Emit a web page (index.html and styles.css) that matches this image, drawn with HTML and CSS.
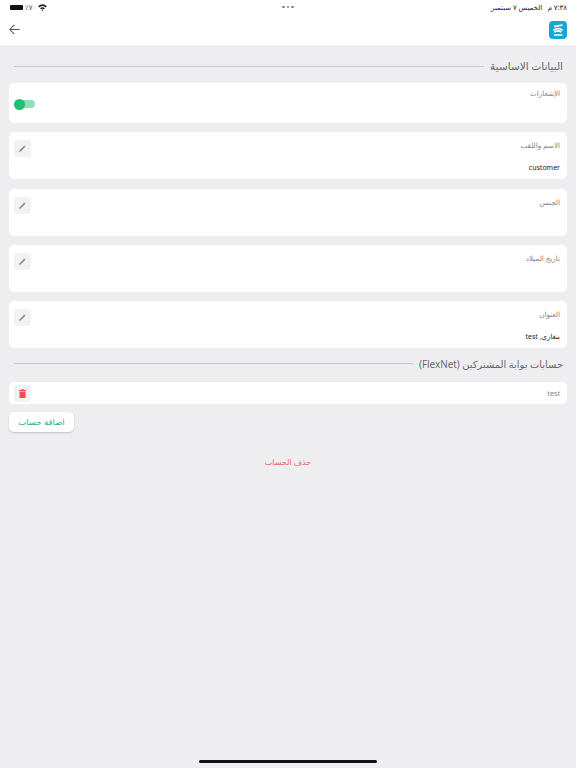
FILE: index.html
```html
<!DOCTYPE html>
<html lang="ar" dir="rtl">

<head>
    <meta charset="UTF-8">
    <meta name="viewport" content="width=device-width, initial-scale=1.0">
    <title>Profile</title>
    <link rel="stylesheet" href="styles.css">
</head>

<body>
    <header class="top">
        <div class="status">
            <div class="status-time">٧:٣٨ م&nbsp;&nbsp; الخميس ٧ سبتمبر</div>
            <div class="status-dots"><i></i><i></i><i></i></div>
            <div class="status-icons">
                <svg class="wifi" viewBox="0 0 10 8" width="9" height="7">
                    <path d="M0 2.6 C3 -.6 7 -.6 10 2.6 L8.7 3.9 C6.4 1.6 3.6 1.6 1.3 3.9 Z M2.2 4.8 C3.9 3.2 6.1 3.2 7.8 4.8 L6.6 6 C5.6 5.2 4.4 5.2 3.4 6 Z M4 6.8 L5 8 L6 6.8 C5.4 6.3 4.6 6.3 4 6.8 Z" fill="#222"/>
                </svg>
                <span class="percent">٧٠٪</span>
                <span class="battery"></span>
            </div>
        </div>
        <div class="nav">
            <svg class="logo" viewBox="0 0 18 18" width="18" height="18">
                <rect width="18" height="18" rx="4" fill="#1ba5d6"/>
                <path d="M5 5.6 L13.6 4 M4.4 9.4 C7.4 7 10.8 7 13.6 9.4 M5.4 11.2 C7.6 9.6 10.2 9.6 12.4 11.2 M5 14 H13.4" stroke="#fff" stroke-width="1.6" fill="none"/>
            </svg>
            <svg class="back" viewBox="0 0 12 12" width="11" height="11">
                <path d="M11.5 6 H1 M5.8 1 L.8 6 L5.8 11" stroke="#555" stroke-width="1.1" fill="none"/>
            </svg>
        </div>
    </header>

    <main class="content">
        <div class="section-head">
            <h2>البيانات الاساسية</h2>
            <span class="rule"></span>
        </div>

        <div class="card card-switch">
            <div class="field-label">الإشعارات</div>
            <div class="switch"><span class="knob"></span></div>
        </div>

        <div class="card card-field">
            <div class="field-text">
                <div class="field-label">الاسم واللقب</div>
                <div class="field-value">customer</div>
            </div>
            <button class="icon-btn"><svg viewBox="0 0 10 10" width="7" height="7"><path d="M0 10 L.6 7.8 L7.6 .8 L9.2 2.4 L2.2 9.4 Z" fill="#88888c"/></svg></button>
        </div>

        <div class="card card-field">
            <div class="field-text">
                <div class="field-label">الجنس</div>
                <div class="field-value"></div>
            </div>
            <button class="icon-btn"><svg viewBox="0 0 10 10" width="7" height="7"><path d="M0 10 L.6 7.8 L7.6 .8 L9.2 2.4 L2.2 9.4 Z" fill="#88888c"/></svg></button>
        </div>

        <div class="card card-field">
            <div class="field-text">
                <div class="field-label">تاريخ الميلاد</div>
                <div class="field-value"></div>
            </div>
            <button class="icon-btn"><svg viewBox="0 0 10 10" width="7" height="7"><path d="M0 10 L.6 7.8 L7.6 .8 L9.2 2.4 L2.2 9.4 Z" fill="#88888c"/></svg></button>
        </div>

        <div class="card card-field">
            <div class="field-text">
                <div class="field-label">العنوان</div>
                <div class="field-value">بنغازي, test</div>
            </div>
            <button class="icon-btn"><svg viewBox="0 0 10 10" width="7" height="7"><path d="M0 10 L.6 7.8 L7.6 .8 L9.2 2.4 L2.2 9.4 Z" fill="#88888c"/></svg></button>
        </div>

        <div class="section-head section-second">
            <h2>حسابات بوابة المشتركين (FlexNet)</h2>
            <span class="rule"></span>
        </div>

        <div class="card card-account">
            <div class="field-label">test</div>
            <button class="icon-btn"><svg viewBox="0 0 8 10" width="7" height="9"><path d="M0 1 H2.4 L2.8 0 H5.2 L5.6 1 H8 V2.2 H0 Z M.6 2.8 H7.4 V10 H.6 Z" fill="#f5484f"/></svg></button>
        </div>

        <div class="actions">
            <button class="add-btn">اضافة حساب</button>
        </div>

        <div class="delete-row">حذف الحساب</div>
    </main>

    <div class="home-bar"></div>
</body>

</html>
```

FILE: styles.css
```css
* {
    margin: 0;
    padding: 0;
    box-sizing: border-box;
}

body {
    height: 768px;
    overflow: hidden;
    position: relative;
    background-color: #eeeef0;
    font-family: "Noto Sans", "DejaVu Sans", sans-serif;
}

.top {
    height: 45px;
    background-color: #fff;
    padding: 0 9px;
}

.status {
    height: 14px;
    display: flex;
    align-items: center;
    justify-content: space-between;
    font-size: 7px;
    color: #222;
}

.status-time {
    width: 120px;
}

.status-dots {
    display: flex;
    gap: 2px;
}

.status-dots i {
    width: 2.5px;
    height: 2.5px;
    border-radius: 50%;
    background-color: #888;
}

.status-icons {
    width: 120px;
    display: flex;
    align-items: center;
    justify-content: flex-end;
    gap: 2px;
}

.percent {
    font-size: 7px;
    color: #444;
}

.battery {
    width: 13px;
    height: 5px;
    margin-left: 1px;
    border-radius: 1px;
    background-color: #111;
}

.nav {
    height: 31px;
    display: flex;
    align-items: center;
    justify-content: space-between;
}

.section-head {
    height: 38px;
    display: flex;
    align-items: center;
    padding: 4px 4px 0 5px;
    gap: 6px;
}

.section-head h2 {
    font-size: 10.5px;
    font-weight: 400;
    color: #66666b;
    white-space: nowrap;
}

.rule {
    flex: 1;
    height: 1px;
    background-color: #c9c9cc;
}

.content {
    padding: 0 9px;
}

.card {
    background-color: #fff;
    border-radius: 5px;
    margin-bottom: 9.33px;
}

.card-switch {
    height: 40px;
    padding: 5px 7px 0 7px;
}

.field-label {
    font-size: 7.2px;
    line-height: 10px;
    color: #85858a;
}

.switch {
    width: 19px;
    height: 8px;
    margin-top: 2px;
    margin-right: auto;
    background-color: #8fdfb8;
    border-radius: 4px;
    display: flex;
    align-items: center;
}

.knob {
    width: 11px;
    height: 11px;
    margin-right: auto;
    margin-left: -2px;
    border-radius: 50%;
    background-color: #1dbf73;
}

.card-field {
    height: 47px;
    display: flex;
    justify-content: space-between;
    padding: 8px 7px 0 5px;
}

.field-value {
    margin-top: 13px;
    height: 10px;
    font-size: 7px;
    line-height: 10px;
    color: #222;
}

.icon-btn {
    width: 17px;
    height: 17px;
    border: none;
    border-radius: 3px;
    background-color: #f2f2f4;
    display: flex;
    align-items: center;
    justify-content: center;
}

.section-second {
    height: 24.5px;
    padding: 0 4px 12px 5px;
}

.section-second h2 {
    font-size: 9.9px;
}

.card-account {
    height: 22px;
    display: flex;
    align-items: center;
    justify-content: space-between;
    padding: 0 7px 0 5px;
    margin-bottom: 8px;
}

.actions {
    display: flex;
    justify-content: flex-end;
}

.add-btn {
    width: 65px;
    height: 20px;
    padding-bottom: 2px;
    border: none;
    border-radius: 5px;
    background-color: #fff;
    box-shadow: 0 1px 2px rgba(0, 0, 0, 0.18);
    color: #1cb678;
    font-family: inherit;
    font-size: 8.5px;
}

.delete-row {
    margin-top: 23.5px;
    text-align: center;
    font-size: 8px;
    line-height: 12px;
    color: #e8666a;
}

.home-bar {
    position: absolute;
    bottom: 5px;
    left: 199px;
    width: 178px;
    height: 3px;
    border-radius: 2px;
    background-color: #111;
}
```
